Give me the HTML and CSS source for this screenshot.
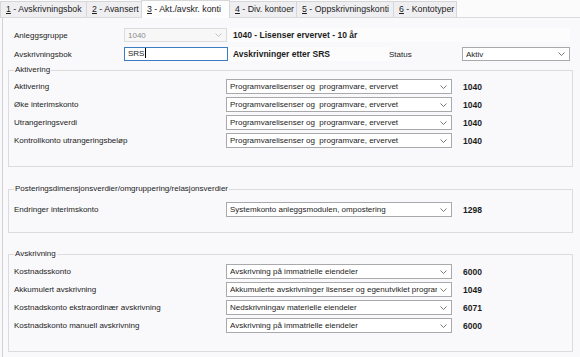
FILE: index.html
```html
<!DOCTYPE html>
<html lang="no">
<head>
  <meta charset="UTF-8">
  <title>Akt./avskr. konti</title>
  <link rel="stylesheet" href="styles.css">
</head>
<body>

  <div class="tabs">
    <div class="tab tab-1"><u>1</u> - Avskrivningsbok</div>
    <div class="tab tab-2"><u>2</u> - Avansert</div>
    <div class="tab tab-3 active"><u>3</u> - Akt./avskr. konti</div>
    <div class="tab tab-4"><u>4</u> - Div. kontoer</div>
    <div class="tab tab-5"><u>5</u> - Oppskrivningskonti</div>
    <div class="tab tab-6"><u>6</u> - Kontotyper</div>
  </div>

  <div class="panel">
    <div class="head">
      <div class="lbl">Anleggsgruppe</div>
      <div class="combo disabled">
        <span class="val">1040</span>
        <svg class="chev" width="7" height="4" viewBox="0 0 7 4"><path d="M0.5 0.5 L3.5 3.5 L6.5 0.5" fill="none" stroke="#c4c4c4" stroke-width="1"/></svg>
      </div>
      <div class="desc wide">1040 - Lisenser ervervet - 10 år</div>

      <div class="lbl">Avskrivningsbok</div>
      <div class="textbox focused">SRS<span class="caret"></span></div>
      <div class="desc">Avskrivninger etter SRS</div>
      <div class="lbl">Status</div>
      <div class="combo">
        <span class="val">Aktiv</span>
        <svg class="chev" width="7" height="4" viewBox="0 0 7 4"><path d="M0.5 0.5 L3.5 3.5 L6.5 0.5" fill="none" stroke="#777" stroke-width="1"/></svg>
      </div>
    </div>

    <fieldset class="group group-akt">
      <legend>Aktivering</legend>
      <div class="row">
        <div class="row-lbl">Aktivering</div>
        <div class="combo wide-combo"><span class="val">Programvarelisenser og&nbsp; programvare, ervervet</span><svg class="chev" width="7" height="4" viewBox="0 0 7 4"><path d="M0.5 0.5 L3.5 3.5 L6.5 0.5" fill="none" stroke="#777" stroke-width="1"/></svg></div>
        <div class="num">1040</div>
      </div>
      <div class="row">
        <div class="row-lbl">Øke interimskonto</div>
        <div class="combo wide-combo"><span class="val">Programvarelisenser og&nbsp; programvare, ervervet</span><svg class="chev" width="7" height="4" viewBox="0 0 7 4"><path d="M0.5 0.5 L3.5 3.5 L6.5 0.5" fill="none" stroke="#777" stroke-width="1"/></svg></div>
        <div class="num">1040</div>
      </div>
      <div class="row">
        <div class="row-lbl">Utrangeringsverdi</div>
        <div class="combo wide-combo"><span class="val">Programvarelisenser og&nbsp; programvare, ervervet</span><svg class="chev" width="7" height="4" viewBox="0 0 7 4"><path d="M0.5 0.5 L3.5 3.5 L6.5 0.5" fill="none" stroke="#777" stroke-width="1"/></svg></div>
        <div class="num">1040</div>
      </div>
      <div class="row">
        <div class="row-lbl">Kontrollkonto utrangeringsbeløp</div>
        <div class="combo wide-combo"><span class="val">Programvarelisenser og&nbsp; programvare, ervervet</span><svg class="chev" width="7" height="4" viewBox="0 0 7 4"><path d="M0.5 0.5 L3.5 3.5 L6.5 0.5" fill="none" stroke="#777" stroke-width="1"/></svg></div>
        <div class="num">1040</div>
      </div>
    </fieldset>

    <fieldset class="group group-post">
      <legend>Posteringsdimensjonsverdier/omgruppering/relasjonsverdier</legend>
      <div class="row">
        <div class="row-lbl">Endringer interimskonto</div>
        <div class="combo wide-combo"><span class="val">Systemkonto anleggsmodulen, ompostering</span><svg class="chev" width="7" height="4" viewBox="0 0 7 4"><path d="M0.5 0.5 L3.5 3.5 L6.5 0.5" fill="none" stroke="#777" stroke-width="1"/></svg></div>
        <div class="num">1298</div>
      </div>
    </fieldset>

    <fieldset class="group group-avskr">
      <legend>Avskrivning</legend>
      <div class="row">
        <div class="row-lbl">Kostnadsskonto</div>
        <div class="combo wide-combo"><span class="val">Avskrivning på immatrielle eiendeler</span><svg class="chev" width="7" height="4" viewBox="0 0 7 4"><path d="M0.5 0.5 L3.5 3.5 L6.5 0.5" fill="none" stroke="#777" stroke-width="1"/></svg></div>
        <div class="num">6000</div>
      </div>
      <div class="row">
        <div class="row-lbl">Akkumulert avskrivning</div>
        <div class="combo wide-combo"><span class="val">Akkumulerte avskrivninger lisenser og egenutviklet prograr</span><svg class="chev" width="7" height="4" viewBox="0 0 7 4"><path d="M0.5 0.5 L3.5 3.5 L6.5 0.5" fill="none" stroke="#777" stroke-width="1"/></svg></div>
        <div class="num">1049</div>
      </div>
      <div class="row">
        <div class="row-lbl">Kostnadskonto ekstraordinær avskrivning</div>
        <div class="combo wide-combo"><span class="val">Nedskrivningav materielle eiendeler</span><svg class="chev" width="7" height="4" viewBox="0 0 7 4"><path d="M0.5 0.5 L3.5 3.5 L6.5 0.5" fill="none" stroke="#777" stroke-width="1"/></svg></div>
        <div class="num">6071</div>
      </div>
      <div class="row">
        <div class="row-lbl">Kostnadskonto manuell avskrivning</div>
        <div class="combo wide-combo"><span class="val">Avskrivning på immatrielle eiendeler</span><svg class="chev" width="7" height="4" viewBox="0 0 7 4"><path d="M0.5 0.5 L3.5 3.5 L6.5 0.5" fill="none" stroke="#777" stroke-width="1"/></svg></div>
        <div class="num">6000</div>
      </div>
    </fieldset>
  </div>

</body>
</html>
```

FILE: styles.css
```css
* {
  box-sizing: border-box;
}

body {
  font-family: 'Liberation Sans', Arial, sans-serif;
  font-size: 8px;
  color: #1c1c1c;
  background: #f9f9fb;
  margin: 0;
  padding: 0;
  width: 580px;
  height: 357px;
  overflow: hidden;
}

/* tab strip */

.tabs {
  display: flex;
  align-items: flex-end;
  height: 18px;
  border-bottom: 1px solid #dadada;
  background: #fbfbfc;
}

.tab {
  height: 16px;
  line-height: 14px;
  font-size: 8.8px;
  padding: 0 5px;
  background: #efeff1;
  border: 1px solid #d7d7d9;
  border-bottom: none;
  margin-right: -1px;
  white-space: nowrap;
}

.tab-1 { width: 87px; }
.tab-2 { width: 56px; }
.tab-3 { width: 89px; }
.tab-4 { width: 68px; }
.tab-5 { width: 98px; }
.tab-6 { width: 64px; }

.tab.active {
  height: 18px;
  line-height: 16px;
  background: #fdfdfe;
  margin-bottom: -1px;
  position: relative;
}

/* page panel */

.panel {
  margin-left: 2px;
  border-left: 1px solid #d2d2d4;
  height: 339px;
}

.head {
  display: grid;
  grid-template-columns: 110px 104px 161px 73px 108px;
  grid-auto-rows: 14px;
  row-gap: 5px;
  align-items: center;
  padding: 10px 0 0 11px;
}

.lbl {
  white-space: nowrap;
}

.desc {
  font-weight: bold;
  font-size: 8.5px;
  padding-left: 5px;
  white-space: nowrap;
  height: 14px;
  line-height: 14px;
  background: #fcfcfd;
}

.desc.wide {
  grid-column: 3 / span 3;
}

/* controls */

.combo {
  display: flex;
  align-items: center;
  height: 14px;
  background: #ffffff;
  border: 1px solid #a9a9ab;
  padding: 0 4px 0 3px;
}

.combo .val {
  flex: 1;
  overflow: hidden;
  white-space: nowrap;
}

.combo .chev {
  flex: none;
  margin-left: 3px;
}

.combo.disabled {
  width: 103px;
  background: #f7f7f8;
  border-color: #dcdcde;
  color: #8c8c8c;
}

.textbox {
  height: 14px;
  line-height: 12px;
  padding: 0 3px;
  background: #ffffff;
  border: 1px solid #3d7bc4;
}

.caret {
  display: inline-block;
  width: 1px;
  height: 10px;
  background: #000;
  vertical-align: -2px;
  margin-left: 1px;
}

/* group boxes */

.group {
  margin: 0 7px 0 5px;
  padding: 0 5px;
  border: 1px solid #dcdcde;
  min-width: 0;
}

.group legend {
  padding: 0 1px;
  line-height: 10px;
  font-size: 8px;
}

.group-akt {
  margin-top: 4px;
  padding-top: 4px;
  padding-bottom: 18px;
}

.group-post {
  margin-top: 17px;
  padding-top: 8px;
  padding-bottom: 15px;
}

.group-avskr {
  margin-top: 16px;
  padding-top: 5px;
  padding-bottom: 18px;
}

.row {
  display: flex;
  align-items: center;
  height: 15px;
  margin-bottom: 3px;
}

.row:last-child {
  margin-bottom: 0;
}

.row-lbl {
  width: 212px;
  white-space: nowrap;
}

.wide-combo {
  width: 226px;
  height: 15px;
}

.num {
  margin-left: 11px;
  font-weight: bold;
  font-size: 8.5px;
}
```
